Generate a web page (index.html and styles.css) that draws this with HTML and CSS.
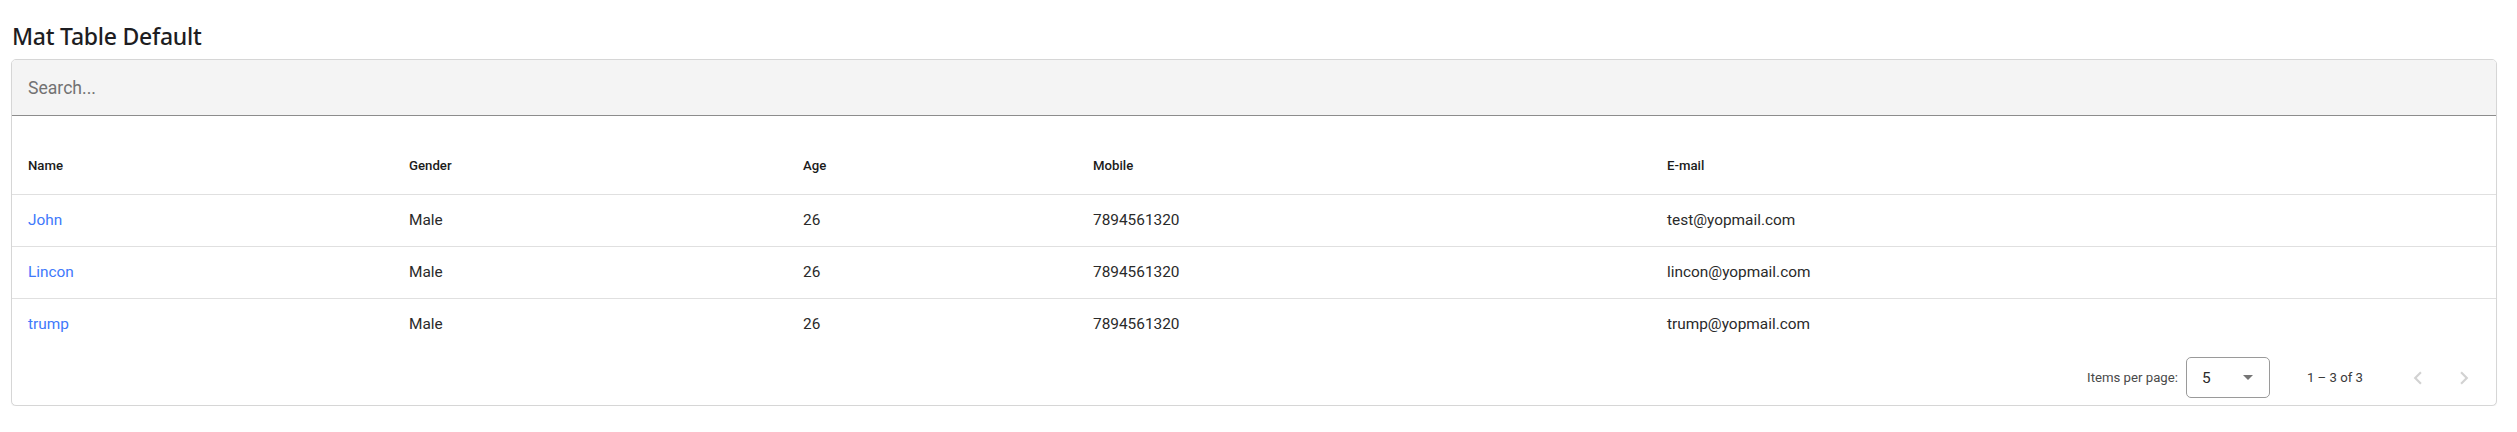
FILE: index.html
```html
<!DOCTYPE html>
<html lang="en">
<head>
<meta charset="utf-8">
<title>Mat Table Default</title>
<link rel="stylesheet" href="styles.css">
</head>
<body>
  <h1 class="page-title">Mat Table Default</h1>
  <div class="card">
    <div class="search-field">
      <input class="search-input" type="text" placeholder="Search...">
    </div>
    <div class="table">
      <div class="row header-row">
        <div class="cell">Name</div>
        <div class="cell">Gender</div>
        <div class="cell">Age</div>
        <div class="cell">Mobile</div>
        <div class="cell">E-mail</div>
      </div>
      <div class="row data-row">
        <div class="cell link">John</div>
        <div class="cell">Male</div>
        <div class="cell">26</div>
        <div class="cell">7894561320</div>
        <div class="cell">test@yopmail.com</div>
      </div>
      <div class="row data-row">
        <div class="cell link">Lincon</div>
        <div class="cell">Male</div>
        <div class="cell">26</div>
        <div class="cell">7894561320</div>
        <div class="cell">lincon@yopmail.com</div>
      </div>
      <div class="row data-row last">
        <div class="cell link">trump</div>
        <div class="cell">Male</div>
        <div class="cell">26</div>
        <div class="cell">7894561320</div>
        <div class="cell">trump@yopmail.com</div>
      </div>
    </div>
    <div class="paginator">
      <span class="page-size-label">Items per page:</span>
      <div class="page-size-select">
        <span class="select-value">5</span>
        <span class="select-arrow"></span>
      </div>
      <span class="range-label">1 – 3 of 3</span>
      <button class="nav-btn" aria-label="Previous page">
        <svg viewBox="0 0 24 24" width="26" height="26"><path d="M15.41 7.41L14 6l-6 6 6 6 1.41-1.41L10.83 12z"/></svg>
      </button>
      <button class="nav-btn" aria-label="Next page">
        <svg viewBox="0 0 24 24" width="26" height="26"><path d="M10 6L8.59 7.41 13.17 12l-4.58 4.59L10 18l6-6z"/></svg>
      </button>
    </div>
  </div>
</body>
</html>
```

FILE: styles.css
```css
* { box-sizing: border-box; }

body {
  margin: 0;
  padding: 0 20px 0 11px;
  background: #ffffff;
  font-family: Roboto, "Liberation Sans", Arial, sans-serif;
  color: #212121;
}

.page-title {
  margin: 20px 0 7px 1px;
  font-family: "Noto Sans", "Open Sans", sans-serif;
  font-weight: 500;
  font-size: 23px;
  line-height: 32px;
  letter-spacing: -0.25px;
  color: #1d1d22;
}

.card {
  border: 1px solid #d6d6d6;
  border-radius: 5px;
  background: #fff;
  box-shadow: 0 1px 1px rgba(0,0,0,0.06);
  overflow: hidden;
}

.search-field {
  height: 56px;
  background: #f4f4f4;
  border-bottom: 1px solid #8c8c8c;
  display: flex;
  align-items: center;
  padding: 0 16px;
}

.search-input {
  border: none;
  outline: none;
  background: transparent;
  font-family: Roboto, sans-serif;
  font-size: 17.6px;
  color: #333;
  width: 100%;
  padding: 0;
  margin-top: 0;
}
.search-input::placeholder { color: #727272; opacity: 1; }

.table {
  padding-top: 17px;
}

.row {
  display: grid;
  grid-template-columns: 381px 394px 290px 574px 1fr;
  align-items: center;
  padding-left: 16px;
  border-bottom: 1px solid #e0e0e0;
}

.header-row {
  height: 62px;
  font-size: 13.2px;
  font-weight: 500;
  color: #1b1b1b;
  padding-top: 3px;
}

.data-row {
  height: 52px;
  font-size: 15.4px;
  color: #2a2a2a;
  padding-bottom: 2px;
}

.data-row.last { border-bottom: none; height: 51px; }

.link { color: #4079fb; }

.paginator {
  height: 55px;
  display: flex;
  align-items: center;
  justify-content: flex-end;
  padding-right: 10px;
  font-size: 13.2px;
  color: #4a4a4a;
}

.page-size-label { margin-right: 8px; }

.page-size-select {
  width: 84px;
  height: 41px;
  border: 1px solid #9a9a9a;
  border-radius: 5px;
  display: flex;
  align-items: center;
  justify-content: space-between;
  padding: 0 16px 0 15px;
  font-size: 15.4px;
  color: #2a2a2a;
}

.select-arrow {
  width: 0;
  height: 0;
  border-left: 5px solid transparent;
  border-right: 5px solid transparent;
  border-top: 5px solid #757575;
}

.range-label {
  margin: 0 33px 0 37px;
  font-size: 13.2px;
  color: #3a3a3a;
}

.nav-btn {
  width: 44px;
  height: 44px;
  border: none;
  background: transparent;
  padding: 0;
  display: flex;
  align-items: center;
  justify-content: center;
  fill: #d2d2d2;
}
.nav-btn + .nav-btn { margin-left: 2px; }
```
